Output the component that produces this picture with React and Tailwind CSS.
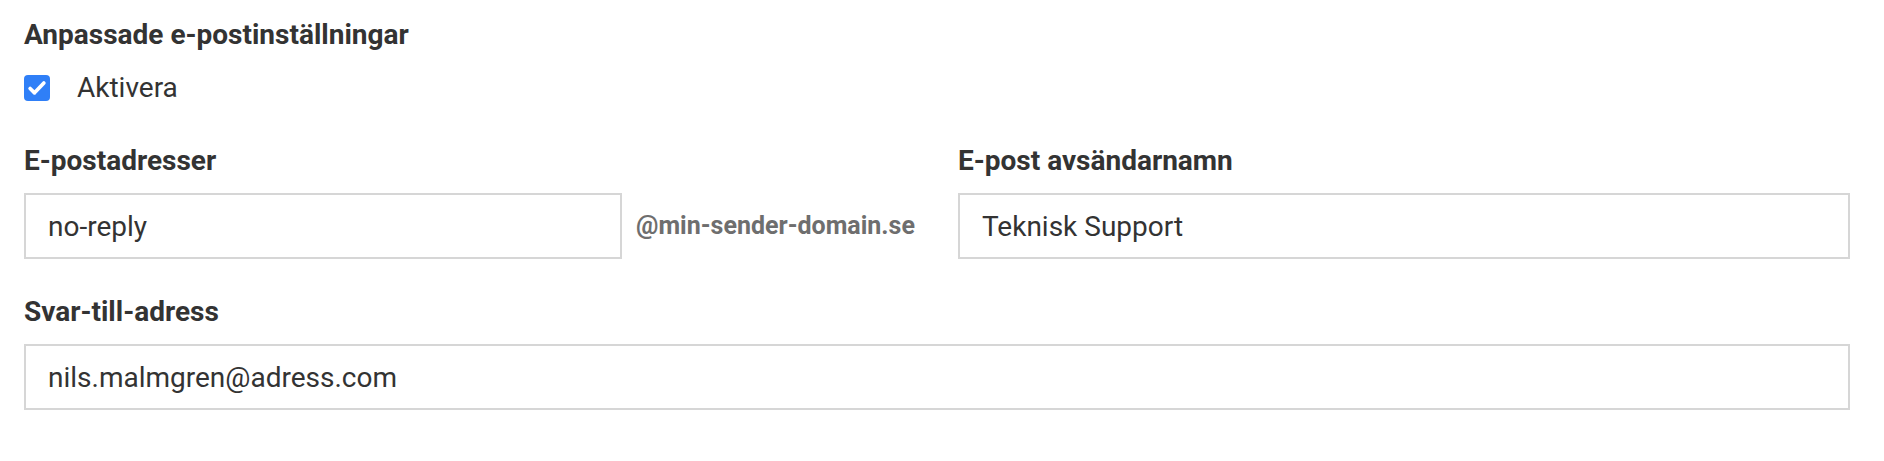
import React from "react";

const Label = ({ children }) => (
  <div className="h-[28px] text-[28px] leading-[28px] font-bold text-[#333333] mb-[18px]">
    {children}
  </div>
);

const Field = ({ value, className = "" }) => (
  <input
    className={`h-[66px] border-2 border-[#d6d6d6] bg-white pl-[22px] pr-4 text-[28px] text-[#333333] outline-none ${className}`}
    defaultValue={value}
  />
);

export default function App() {
  return (
    <div
      className="w-[1884px] h-[461px] bg-white pt-[21px] pl-[24px] pr-[34px]"
      style={{ fontFamily: "Roboto, 'Liberation Sans', sans-serif" }}
    >
      {/* Heading */}
      <div className="h-[28px] text-[28px] leading-[28px] font-bold text-[#333333]">
        Anpassade e-postinställningar
      </div>

      {/* Enable checkbox */}
      <label className="mt-[26px] flex h-[26px] items-center">
        <span className="flex h-[26px] w-[26px] items-center justify-center rounded-[4px] bg-[#2f7ff7]">
          <svg viewBox="0 0 24 24" className="h-[22px] w-[22px]" fill="none">
            <path
              d="M4.5 12.5l4.8 4.8L19.5 6.5"
              stroke="white"
              strokeWidth="4"
              strokeLinecap="round"
              strokeLinejoin="round"
            />
          </svg>
        </span>
        <span className="ml-[27px] text-[28px] leading-[28px] text-[#333333]">Aktivera</span>
      </label>

      {/* Sender address + name */}
      <div className="mt-[46px] flex gap-[24px]">
        <div className="w-[910px]">
          <Label>E-postadresser</Label>
          <div className="flex items-center">
            <Field value="no-reply" className="w-[598px]" />
            <span className="ml-[14px] text-[25px] font-bold text-[#6e6e6e]">
              @min-sender-domain.se
            </span>
          </div>
        </div>
        <div className="flex-1">
          <Label>E-post avsändarnamn</Label>
          <Field value="Teknisk Support" className="w-full" />
        </div>
      </div>

      {/* Reply-to */}
      <div className="mt-[39px]">
        <Label>Svar-till-adress</Label>
        <Field value="nils.malmgren@adress.com" className="w-full" />
      </div>
    </div>
  );
}
